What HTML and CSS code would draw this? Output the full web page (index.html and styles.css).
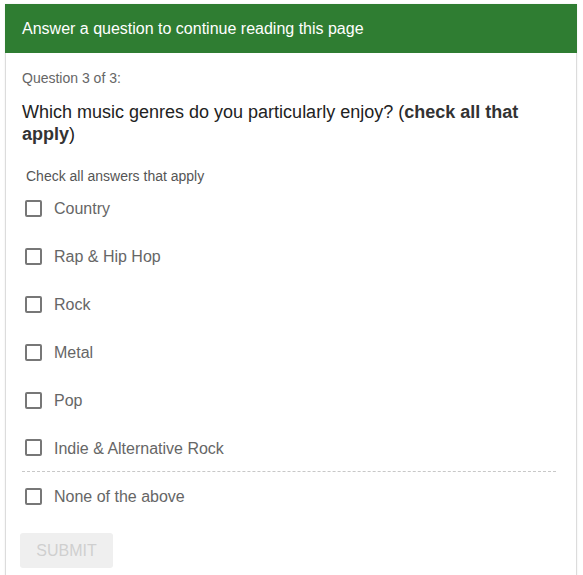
FILE: index.html
```html
<!DOCTYPE html>
<html>
<head>
<meta charset="utf-8">
<link rel="stylesheet" href="styles.css">
</head>
<body>
<div class="card">
  <div class="header">Answer a question to continue reading this page</div>
  <div class="content">
    <div class="qnum">Question 3 of 3:</div>
    <div class="question">Which music genres do you particularly enjoy? (<b>check all that apply</b>)</div>
    <div class="hint">Check all answers that apply</div>
    <div class="options">
      <label class="opt"><span class="box"></span><span class="lbl">Country</span></label>
      <label class="opt"><span class="box"></span><span class="lbl">Rap &amp; Hip Hop</span></label>
      <label class="opt"><span class="box"></span><span class="lbl">Rock</span></label>
      <label class="opt"><span class="box"></span><span class="lbl">Metal</span></label>
      <label class="opt"><span class="box"></span><span class="lbl">Pop</span></label>
      <label class="opt last"><span class="box"></span><span class="lbl">Indie &amp; Alternative Rock</span></label>
      <label class="opt"><span class="box"></span><span class="lbl">None of the above</span></label>
    </div>
    <div class="submit">SUBMIT</div>
  </div>
</div>
</body>
</html>
```
FILE: styles.css
```css
html, body {
  margin: 0;
  padding: 0;
  background: #fff;
  font-family: "Liberation Sans", Arial, Helvetica, sans-serif;
}
.card {
  margin: 4px 0 0 5px;
  width: 570px;
  height: 620px;
  border: 1px solid #dcdcdc;
  border-top: none;
  box-shadow: 0 0 2px rgba(0,0,0,0.08);
}
.header {
  height: 49px;
  margin: 0 -1px;
  background: #2f7d32;
  color: #fff;
  font-size: 16px;
  display: flex;
  align-items: center;
  padding: 0 17px;
}
.content {
  padding: 0 20px 0 16px;
}
.qnum {
  margin-top: 16px;
  font-size: 14px;
  line-height: 18px;
  color: #666;
}
.question {
  margin-top: 14px;
  max-width: 510px;
  font-size: 18px;
  line-height: 22px;
  color: #222;
}
.question b {
  color: #333;
}
.hint {
  margin-top: 23px;
  font-size: 14px;
  line-height: 16px;
  color: #555;
  padding-left: 4px;
}
.options {
  display: flex;
  flex-direction: column;
}
.opt {
  height: 48px;
  display: flex;
  align-items: center;
  padding-left: 3px;
}
.opt.last {
  height: 47px;
  border-bottom: 1px dashed #c8c8c8;
}
.box {
  width: 13px;
  height: 13px;
  border: 2px solid #777;
  border-radius: 2px;
  flex: none;
}
.lbl {
  margin-left: 12px;
  padding-top: 2px;
  font-size: 16px;
  color: #666;
}
.submit {
  margin: 13px 0 0 -2px;
  width: 93px;
  height: 35px;
  background: #efefef;
  border-radius: 3px;
  color: #cfcfcf;
  font-size: 16px;
  display: flex;
  align-items: center;
  justify-content: center;
}
```
